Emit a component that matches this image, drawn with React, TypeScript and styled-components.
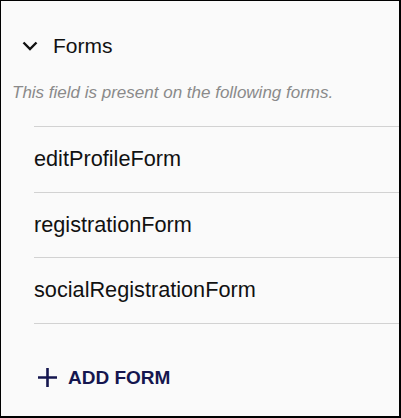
import styled, { createGlobalStyle } from "styled-components";

const GlobalStyle = createGlobalStyle`
  html, body {
    margin: 0;
    padding: 0;
    background: #fafafa;
  }
  * {
    box-sizing: border-box;
  }
`;

const Panel = styled.div`
  width: 401px;
  height: 418px;
  border: 1px solid #000;
  border-right-width: 2px;
  border-bottom-width: 2px;
  background: #fafafa;
  padding-top: 25px;
  font-family: "Liberation Sans", Arial, sans-serif;
  color: #111;
  overflow: hidden;
`;

const Header = styled.div`
  display: flex;
  align-items: center;
  gap: 15px;
  height: 40px;
  padding-left: 21px;
  cursor: pointer;
`;

const Title = styled.span`
  font-size: 21px;
  color: #111;
`;

const Hint = styled.p`
  margin: 17px 0 0 11px;
  font-size: 17px;
  line-height: 20px;
  font-style: italic;
  color: #8a8a8a;
`;

const List = styled.ul`
  list-style: none;
  margin: 23px 0 0 33px;
  padding: 0;
  border-top: 1px solid #d2d2d2;
`;

const Item = styled.li`
  display: flex;
  align-items: center;
  height: 65.5px;
  border-bottom: 1px solid #d2d2d2;
  font-size: 21.7px;
  color: #111;
`;

const AddButton = styled.button`
  display: flex;
  align-items: center;
  gap: 11px;
  margin: 43px 0 0 37px;
  padding: 0;
  border: none;
  background: none;
  font-family: "Liberation Sans", Arial, sans-serif;
  font-size: 19px;
  font-weight: bold;
  color: #15164f;
  cursor: pointer;
`;

const Chevron = () => (
  <svg width="16" height="10" viewBox="0 0 16 10">
    <path d="M1.5 1.5 L8 8 L14.5 1.5" fill="none" stroke="#111" strokeWidth="2.4" />
  </svg>
);

const Plus = () => (
  <svg width="19" height="19" viewBox="0 0 19 19">
    <path d="M9.5 0 V19 M0 9.5 H19" stroke="#15164f" strokeWidth="2.6" />
  </svg>
);

const forms = ["editProfileForm", "registrationForm", "socialRegistrationForm"];

const App = () => {
  return (
    <>
      <GlobalStyle />
      <Panel>
        <Header>
          <Chevron />
          <Title>Forms</Title>
        </Header>
        <Hint>This field is present on the following forms.</Hint>
        <List>
          {forms.map( ( name ) => (
            <Item key={name}>{name}</Item>
          ) )}
        </List>
        <AddButton>
          <Plus />
          ADD FORM
        </AddButton>
      </Panel>
    </>
  );
};

export default App;
